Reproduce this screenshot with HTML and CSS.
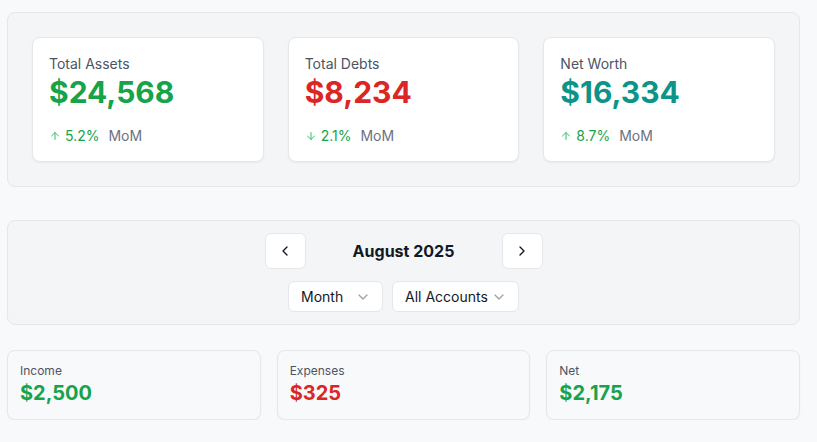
FILE: index.html
```html
<!DOCTYPE html>
<html lang="en">
<head>
<meta charset="utf-8">
<title>Finance Overview</title>
<link rel="stylesheet" href="styles.css">
</head>
<body>
<main class="page">
  <section class="panel summary">
    <div class="stat-card">
      <div class="stat-label">Total Assets</div>
      <div class="stat-value green">$24,568</div>
      <div class="stat-change">
        <svg class="arrow" viewBox="0 0 24 24" width="12" height="12"><path d="m5 12 7-7 7 7"/><path d="M12 19V5"/></svg>
        <span class="pct">5.2%</span><span class="mom">MoM</span>
      </div>
    </div>
    <div class="stat-card">
      <div class="stat-label">Total Debts</div>
      <div class="stat-value red">$8,234</div>
      <div class="stat-change">
        <svg class="arrow" viewBox="0 0 24 24" width="12" height="12"><path d="M12 5v14"/><path d="m19 12-7 7-7-7"/></svg>
        <span class="pct">2.1%</span><span class="mom">MoM</span>
      </div>
    </div>
    <div class="stat-card">
      <div class="stat-label">Net Worth</div>
      <div class="stat-value teal">$16,334</div>
      <div class="stat-change">
        <svg class="arrow" viewBox="0 0 24 24" width="12" height="12"><path d="m5 12 7-7 7 7"/><path d="M12 19V5"/></svg>
        <span class="pct">8.7%</span><span class="mom">MoM</span>
      </div>
    </div>
  </section>

  <section class="panel controls">
    <div class="nav-row">
      <button class="nav-btn" aria-label="Previous month">
        <svg viewBox="0 0 24 24" width="16" height="16"><path d="m15 18-6-6 6-6"/></svg>
      </button>
      <div class="period">August 2025</div>
      <button class="nav-btn" aria-label="Next month">
        <svg viewBox="0 0 24 24" width="16" height="16"><path d="m9 18 6-6-6-6"/></svg>
      </button>
    </div>
    <div class="filter-row">
      <div class="select select-period">
        <span>Month</span>
        <svg viewBox="0 0 24 24" width="16" height="16"><path d="m6 9 6 6 6-6"/></svg>
      </div>
      <div class="select select-accounts">
        <span>All Accounts</span>
        <svg viewBox="0 0 24 24" width="16" height="16"><path d="m6 9 6 6 6-6"/></svg>
      </div>
    </div>
  </section>

  <section class="totals">
    <div class="total-card">
      <div class="total-label">Income</div>
      <div class="total-value green">$2,500</div>
    </div>
    <div class="total-card">
      <div class="total-label">Expenses</div>
      <div class="total-value red">$325</div>
    </div>
    <div class="total-card">
      <div class="total-label">Net</div>
      <div class="total-value green">$2,175</div>
    </div>
  </section>
</main>
</body>
</html>
```

FILE: styles.css
```css
* { box-sizing: border-box; }

html, body {
  margin: 0;
  padding: 0;
  background: #f8f9fb;
  font-family: Inter, "Noto Sans", "Liberation Sans", sans-serif;
  color: #111827;
}

.page {
  width: 793px;
  margin-left: 7px;
  padding-top: 12px;
  display: flex;
  flex-direction: column;
}

.panel {
  background: #f4f5f6;
  border: 1px solid #e5e7eb;
  border-radius: 8px;
}

.summary {
  padding: 24px;
  display: grid;
  grid-template-columns: repeat(3, 1fr);
  gap: 24px;
  margin-bottom: 33px;
}

.stat-card {
  background: #ffffff;
  border: 1px solid #e5e7eb;
  border-radius: 8px;
  box-shadow: 0 1px 2px rgba(0, 0, 0, 0.05);
  padding: 16px 16px 15px;
  height: 125px;
}

.stat-label {
  font-size: 14px;
  line-height: 20px;
  color: #4b5563;
}

.stat-value {
  font-size: 30px;
  line-height: 36px;
  font-weight: 700;
}

.green { color: #16a34a; }
.red { color: #dc2626; }
.teal { color: #0d9488; }

.stat-change {
  margin-top: 16px;
  display: flex;
  align-items: center;
  font-size: 14px;
  line-height: 20px;
}

.arrow {
  fill: none;
  stroke: #34c06a;
  stroke-width: 2;
  stroke-linecap: round;
  stroke-linejoin: round;
  margin-right: 4px;
}

.pct { color: #16a34a; }
.mom { color: #6b7280; margin-left: 9px; }

.controls {
  padding: 12px;
  display: flex;
  flex-direction: column;
  align-items: center;
  gap: 12px;
  margin-bottom: 25px;
}

.nav-row {
  display: flex;
  align-items: center;
  gap: 16px;
}

.nav-btn {
  width: 41px;
  height: 36px;
  background: #ffffff;
  border: 1px solid #e5e7eb;
  border-radius: 6px;
  display: flex;
  align-items: center;
  justify-content: center;
  padding: 0;
  cursor: pointer;
}

.nav-btn svg {
  fill: none;
  stroke: #111827;
  stroke-width: 2;
  stroke-linecap: round;
  stroke-linejoin: round;
}

.period {
  width: 164px;
  text-align: center;
  font-size: 16px;
  line-height: 24px;
  font-weight: 700;
  color: #111827;
}

.filter-row {
  display: flex;
  gap: 9px;
}

.select {
  height: 31px;
  background: #ffffff;
  border: 1px solid #e5e7eb;
  border-radius: 6px;
  display: flex;
  align-items: center;
  justify-content: space-between;
  padding: 0 11px 0 12px;
  font-size: 14px;
  line-height: 20px;
  color: #111827;
}

.select svg {
  fill: none;
  stroke: #9ca3af;
  stroke-width: 2;
  stroke-linecap: round;
  stroke-linejoin: round;
}

.select-period { width: 95px; }
.select-accounts { width: 127px; }

.totals {
  display: grid;
  grid-template-columns: repeat(3, 1fr);
  gap: 16px;
}

.total-card {
  background: #f8f9fa;
  border: 1px solid #e5e7eb;
  border-radius: 8px;
  box-shadow: 0 1px 2px rgba(0, 0, 0, 0.04);
  padding: 12px;
  height: 70px;
}

.total-label {
  font-size: 12px;
  line-height: 16px;
  color: #4b5563;
}

.total-value {
  font-size: 20px;
  line-height: 28px;
  font-weight: 700;
}
```
